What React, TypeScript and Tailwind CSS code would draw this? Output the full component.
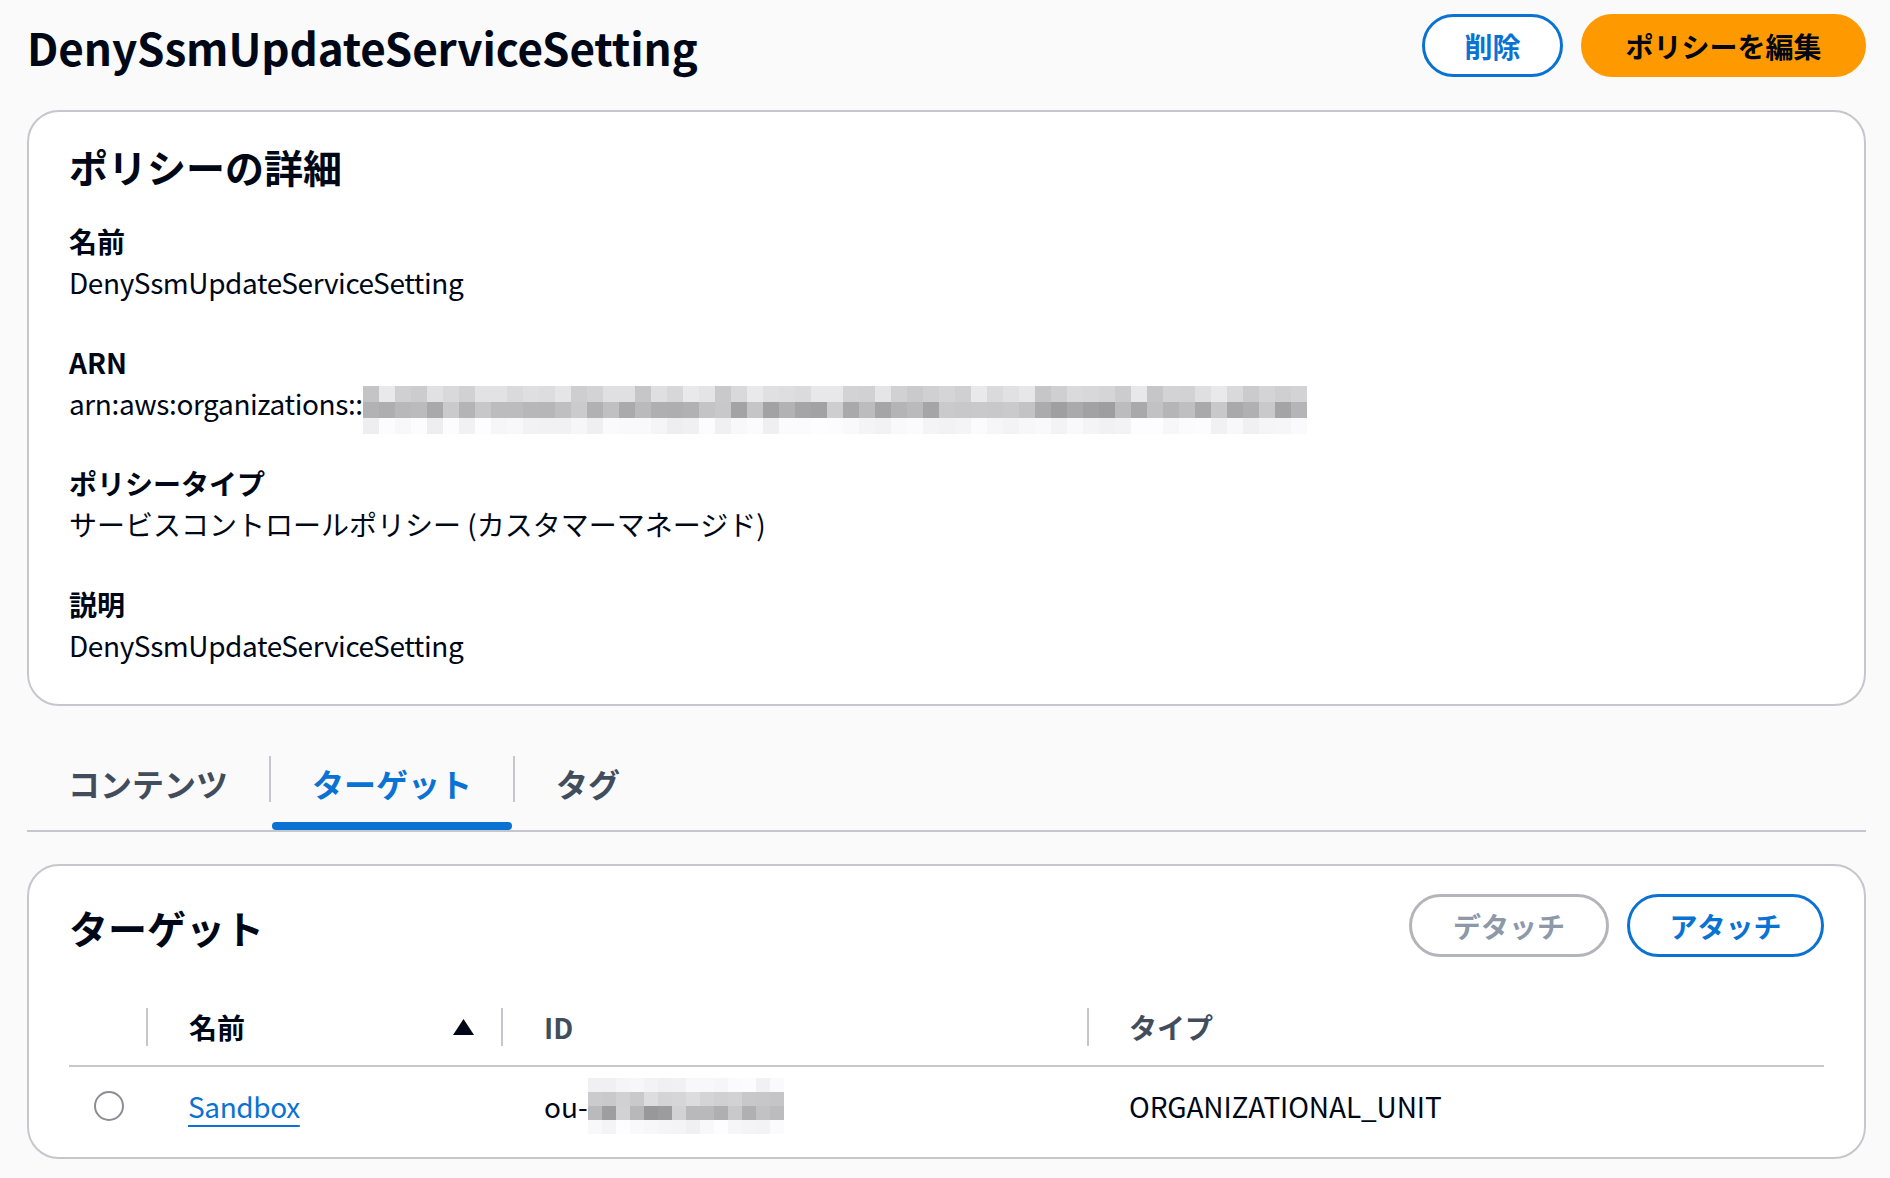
import { useMemo } from "react";

const makeRng = (seed: number) => {
  let s = seed;
  return () => {
    s = (s * 16807) % 2147483647;
    return s / 2147483647;
  };
};

// pixelated "redacted" block, drawn as an svg mosaic
const Mosaic = ({
  cols,
  size,
  rows,
  seed,
  className,
}: {
  cols: number;
  size: number;
  rows: [number, number][];
  seed: number;
  className?: string;
}) => {
  const cells = useMemo(() => {
    const rnd = makeRng(seed);
    const out: { x: number; y: number; c: string }[] = [];
    rows.forEach(([lo, hi], r) => {
      for (let c = 0; c < cols; c++) {
        const v = Math.round(lo + (hi - lo) * rnd());
        out.push({ x: c * size, y: r * size, c: `rgb(${v},${v},${Math.min(255, v + 3)})` });
      }
    });
    return out;
  }, [cols, size, rows, seed]);

  return (
    <svg
      width={cols * size}
      height={rows.length * size}
      className={className}
      shapeRendering="crispEdges"
    >
      {cells.map((cell, i) => (
        <rect key={i} x={cell.x} y={cell.y} width={size} height={size} fill={cell.c} />
      ))}
    </svg>
  );
};

const arnRows: [number, number][] = [
  [196, 236],
  [158, 206],
  [238, 253],
];

const idRows: [number, number][] = [
  [240, 253],
  [196, 226],
  [150, 214],
  [240, 253],
];

const fields = [
  { label: "名前", value: "DenySsmUpdateServiceSetting", latin: true },
  { label: "ARN", value: "arn", latin: true },
  { label: "ポリシータイプ", value: "サービスコントロールポリシー (カスタマーマネージド)", latin: false },
  { label: "説明", value: "DenySsmUpdateServiceSetting", latin: true },
];

const tabs = ["コンテンツ", "ターゲット", "タグ"];

const App = () => {
  return (
    <div className="min-h-screen bg-[#fafafa] pl-[27px] pr-[24px] pt-[14px] font-['Noto_Sans_CJK_JP','Noto_Sans',sans-serif] text-[#000716]">
      {/* Header */}
      <div className="flex items-center justify-between">
        <h1 className="mt-[2px] text-[44px] font-bold leading-[56px] tracking-[-0.1px]">
          DenySsmUpdateServiceSetting
        </h1>
        <div className="flex items-center gap-[18px]">
          <button className="h-[63px] w-[141px] rounded-full border-[3px] border-[#0972d3] bg-white text-[28px] font-bold text-[#0972d3]">
            削除
          </button>
          <button className="h-[63px] w-[285px] rounded-full border-[3px] border-[#ff9900] bg-[#ff9900] text-[28px] font-bold text-[#000716]">
            ポリシーを編集
          </button>
        </div>
      </div>

      {/* Policy details */}
      <div className="mt-[33px] rounded-[32px] border-2 border-[#c6c6cd] bg-white pb-[39px] pl-[40px] pr-[40px] pt-[30px]">
        <h2 className="text-[39px] font-bold leading-[48px]">ポリシーの詳細</h2>
        <div className="mt-[31px] flex flex-col gap-[40px]">
          {fields.map((f) => (
            <div key={f.label} className="flex flex-col gap-[1px]">
              <div className="text-[28px] font-bold leading-[40px]">{f.label}</div>
              {f.value === "arn" ? (
                <div className="flex h-[40px] items-start text-[28px] leading-[40px] tracking-[-0.4px]">
                  <span>arn:aws:organizations::</span>
                  <Mosaic cols={59} size={16} rows={arnRows} seed={7} className="mt-[3px] shrink-0" />
                </div>
              ) : (
                <div className={`text-[28px] leading-[40px] ${f.latin ? "tracking-[-0.4px]" : ""}`}>{f.value}</div>
              )}
            </div>
          ))}
        </div>
      </div>

      {/* Tabs */}
      <div className="mt-[30px] flex items-end border-b-2 border-[#c6c6cd]">
        {tabs.map((t, i) => (
          <div key={t} className="flex items-end">
            {i > 0 && <div className="mb-[28px] h-[46px] w-[2px] bg-[#c6c6cd]" />}
            <div
              className={`relative flex h-[94px] items-center px-[41px] text-[32px] font-bold ${
                i === 1 ? "text-[#0972d3]" : "text-[#414d5c]"
              }`}
            >
              {t}
              {i === 1 && (
                <div className="absolute bottom-0 left-[1px] right-[1px] h-[8px] rounded-full bg-[#0972d3]" />
              )}
            </div>
          </div>
        ))}
      </div>

      {/* Targets */}
      <div className="mb-[18px] mt-[32px] rounded-[32px] border-2 border-[#c6c6cd] bg-white px-[40px] pb-[12px] pt-[28px]">
        <div className="flex items-center justify-between">
          <h2 className="mt-[3px] text-[39px] font-bold leading-[48px]">ターゲット</h2>
          <div className="flex items-center gap-[18px]">
            <button className="h-[63px] w-[200px] rounded-full border-[3px] border-[#b4b4bb] bg-white text-[28px] font-bold text-[#8d99a8]">
              デタッチ
            </button>
            <button className="h-[63px] w-[197px] rounded-full border-[3px] border-[#0972d3] bg-white text-[28px] font-bold text-[#0972d3]">
              アタッチ
            </button>
          </div>
        </div>

        <div className="mt-[34px]">
          <div className="grid h-[76px] grid-cols-[77px_355px_586px_1fr] items-center border-b-2 border-[#c6c6cd] pb-[2px] text-[28px] font-bold">
            <div />
            <div className="flex items-center">
              <div className="h-[38px] w-[2px] bg-[#c6c6cd]" />
              <span className="ml-[41px] flex-1">名前</span>
              <svg width="21" height="16" viewBox="0 0 21 16" className="mr-[27px]">
                <path d="M10.5 0 L21 16 L0 16 Z" fill="#000716" />
              </svg>
            </div>
            <div className="flex items-center text-[#414d5c]">
              <div className="h-[38px] w-[2px] bg-[#c6c6cd]" />
              <span className="ml-[41px]">ID</span>
            </div>
            <div className="flex items-center text-[#414d5c]">
              <div className="h-[38px] w-[2px] bg-[#c6c6cd]" />
              <span className="ml-[40px]">タイプ</span>
            </div>
          </div>

          <div className="grid h-[78px] grid-cols-[77px_355px_586px_1fr] items-center text-[28px]">
            <div className="pl-[25px]">
              <div className="h-[30px] w-[30px] rounded-full border-2 border-[#8c8c94] bg-white" />
            </div>
            <div className="pl-[42px]">
              <a className="cursor-pointer tracking-[-0.4px] text-[#0972d3] underline decoration-2 underline-offset-[7px]">Sandbox</a>
            </div>
            <div className="flex items-center pl-[43px]">
              <span>ou-</span>
              <Mosaic cols={14} size={14} rows={idRows} seed={23} className="shrink-0" />
            </div>
            <div className="pl-[42px] tracking-[-0.1px]">ORGANIZATIONAL_UNIT</div>
          </div>
        </div>
      </div>
    </div>
  );
};

export default App;
